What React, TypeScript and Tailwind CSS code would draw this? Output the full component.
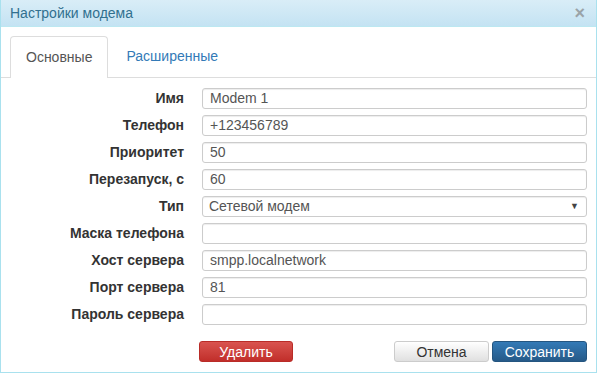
import React from "react";

const fields: { label: string; value: string; select?: boolean }[] = [
  { label: "Имя", value: "Modem 1" },
  { label: "Телефон", value: "+123456789" },
  { label: "Приоритет", value: "50" },
  { label: "Перезапуск, с", value: "60" },
  { label: "Тип", value: "Сетевой модем", select: true },
  { label: "Маска телефона", value: "" },
  { label: "Хост сервера", value: "smpp.localnetwork" },
  { label: "Порт сервера", value: "81" },
  { label: "Пароль сервера", value: "" },
];

const App: React.FC = () => {
  return (
    <div className="w-[597px] h-[373px] bg-white font-['Liberation_Sans',Arial,sans-serif]">
      <div className="flex flex-col h-full border border-t-0 border-[#a9e1ee]">
        <div className="flex items-center justify-between h-[27px] px-[9px] bg-gradient-to-b from-[#d9edf7] to-[#c4e3f3] border-b border-[#bce8f1]">
          <span className="text-[14px] text-[#31708f]">Настройки модема</span>
          <span className="text-[18px] font-bold text-[#9aa3a8] leading-none mr-[2px]">×</span>
        </div>

        <div className="flex items-end h-[51px] pl-[9px] border-b border-[#ddd]">
          <div className="flex items-center h-[42px] px-[15px] -mb-px bg-white border border-b-0 border-[#ddd] rounded-t-[4px] text-[14px] text-[#555]">
            Основные
          </div>
          <div className="flex items-center h-[42px] px-[18px] text-[14px] text-[#337ab7]">
            Расширенные
          </div>
        </div>

        <div className="flex flex-col gap-[6px] pt-[10px] pr-[9px]">
          {fields.map((f) => (
            <div key={f.label} className="flex items-center">
              <label className="w-[183px] text-right text-[14px] font-bold text-[#333]">
                {f.label}
              </label>
              <div className="ml-[18px] flex-1 flex items-center justify-between h-[21px] px-[7px] border border-[#ccc] rounded-[3px] text-[14px] text-[#555] shadow-[inset_0_1px_1px_rgba(0,0,0,0.075)]">
                <span className={f.select ? "-ml-[1px]" : ""}>{f.value}</span>
                {f.select && <span className="text-[9px] text-[#444]">▼</span>}
              </div>
            </div>
          ))}
        </div>

        <div className="flex items-center mt-[16px] pl-[198px] pr-[9px]">
          <button className="w-[94px] h-[21px] rounded-[3px] border border-[#b92c28] bg-gradient-to-b from-[#d9534f] to-[#c12e2a] text-[14px] text-white">
            Удалить
          </button>
          <div className="flex-1" />
          <button className="w-[95px] h-[21px] rounded-[3px] border border-[#ccc] bg-gradient-to-b from-white to-[#e0e0e0] text-[14px] text-[#333]">
            Отмена
          </button>
          <button className="ml-[3px] w-[95px] h-[21px] rounded-[3px] border border-[#245580] bg-gradient-to-b from-[#337ab7] to-[#265a88] text-[14px] text-white">
            Сохранить
          </button>
        </div>
      </div>
    </div>
  );
};

export default App;
